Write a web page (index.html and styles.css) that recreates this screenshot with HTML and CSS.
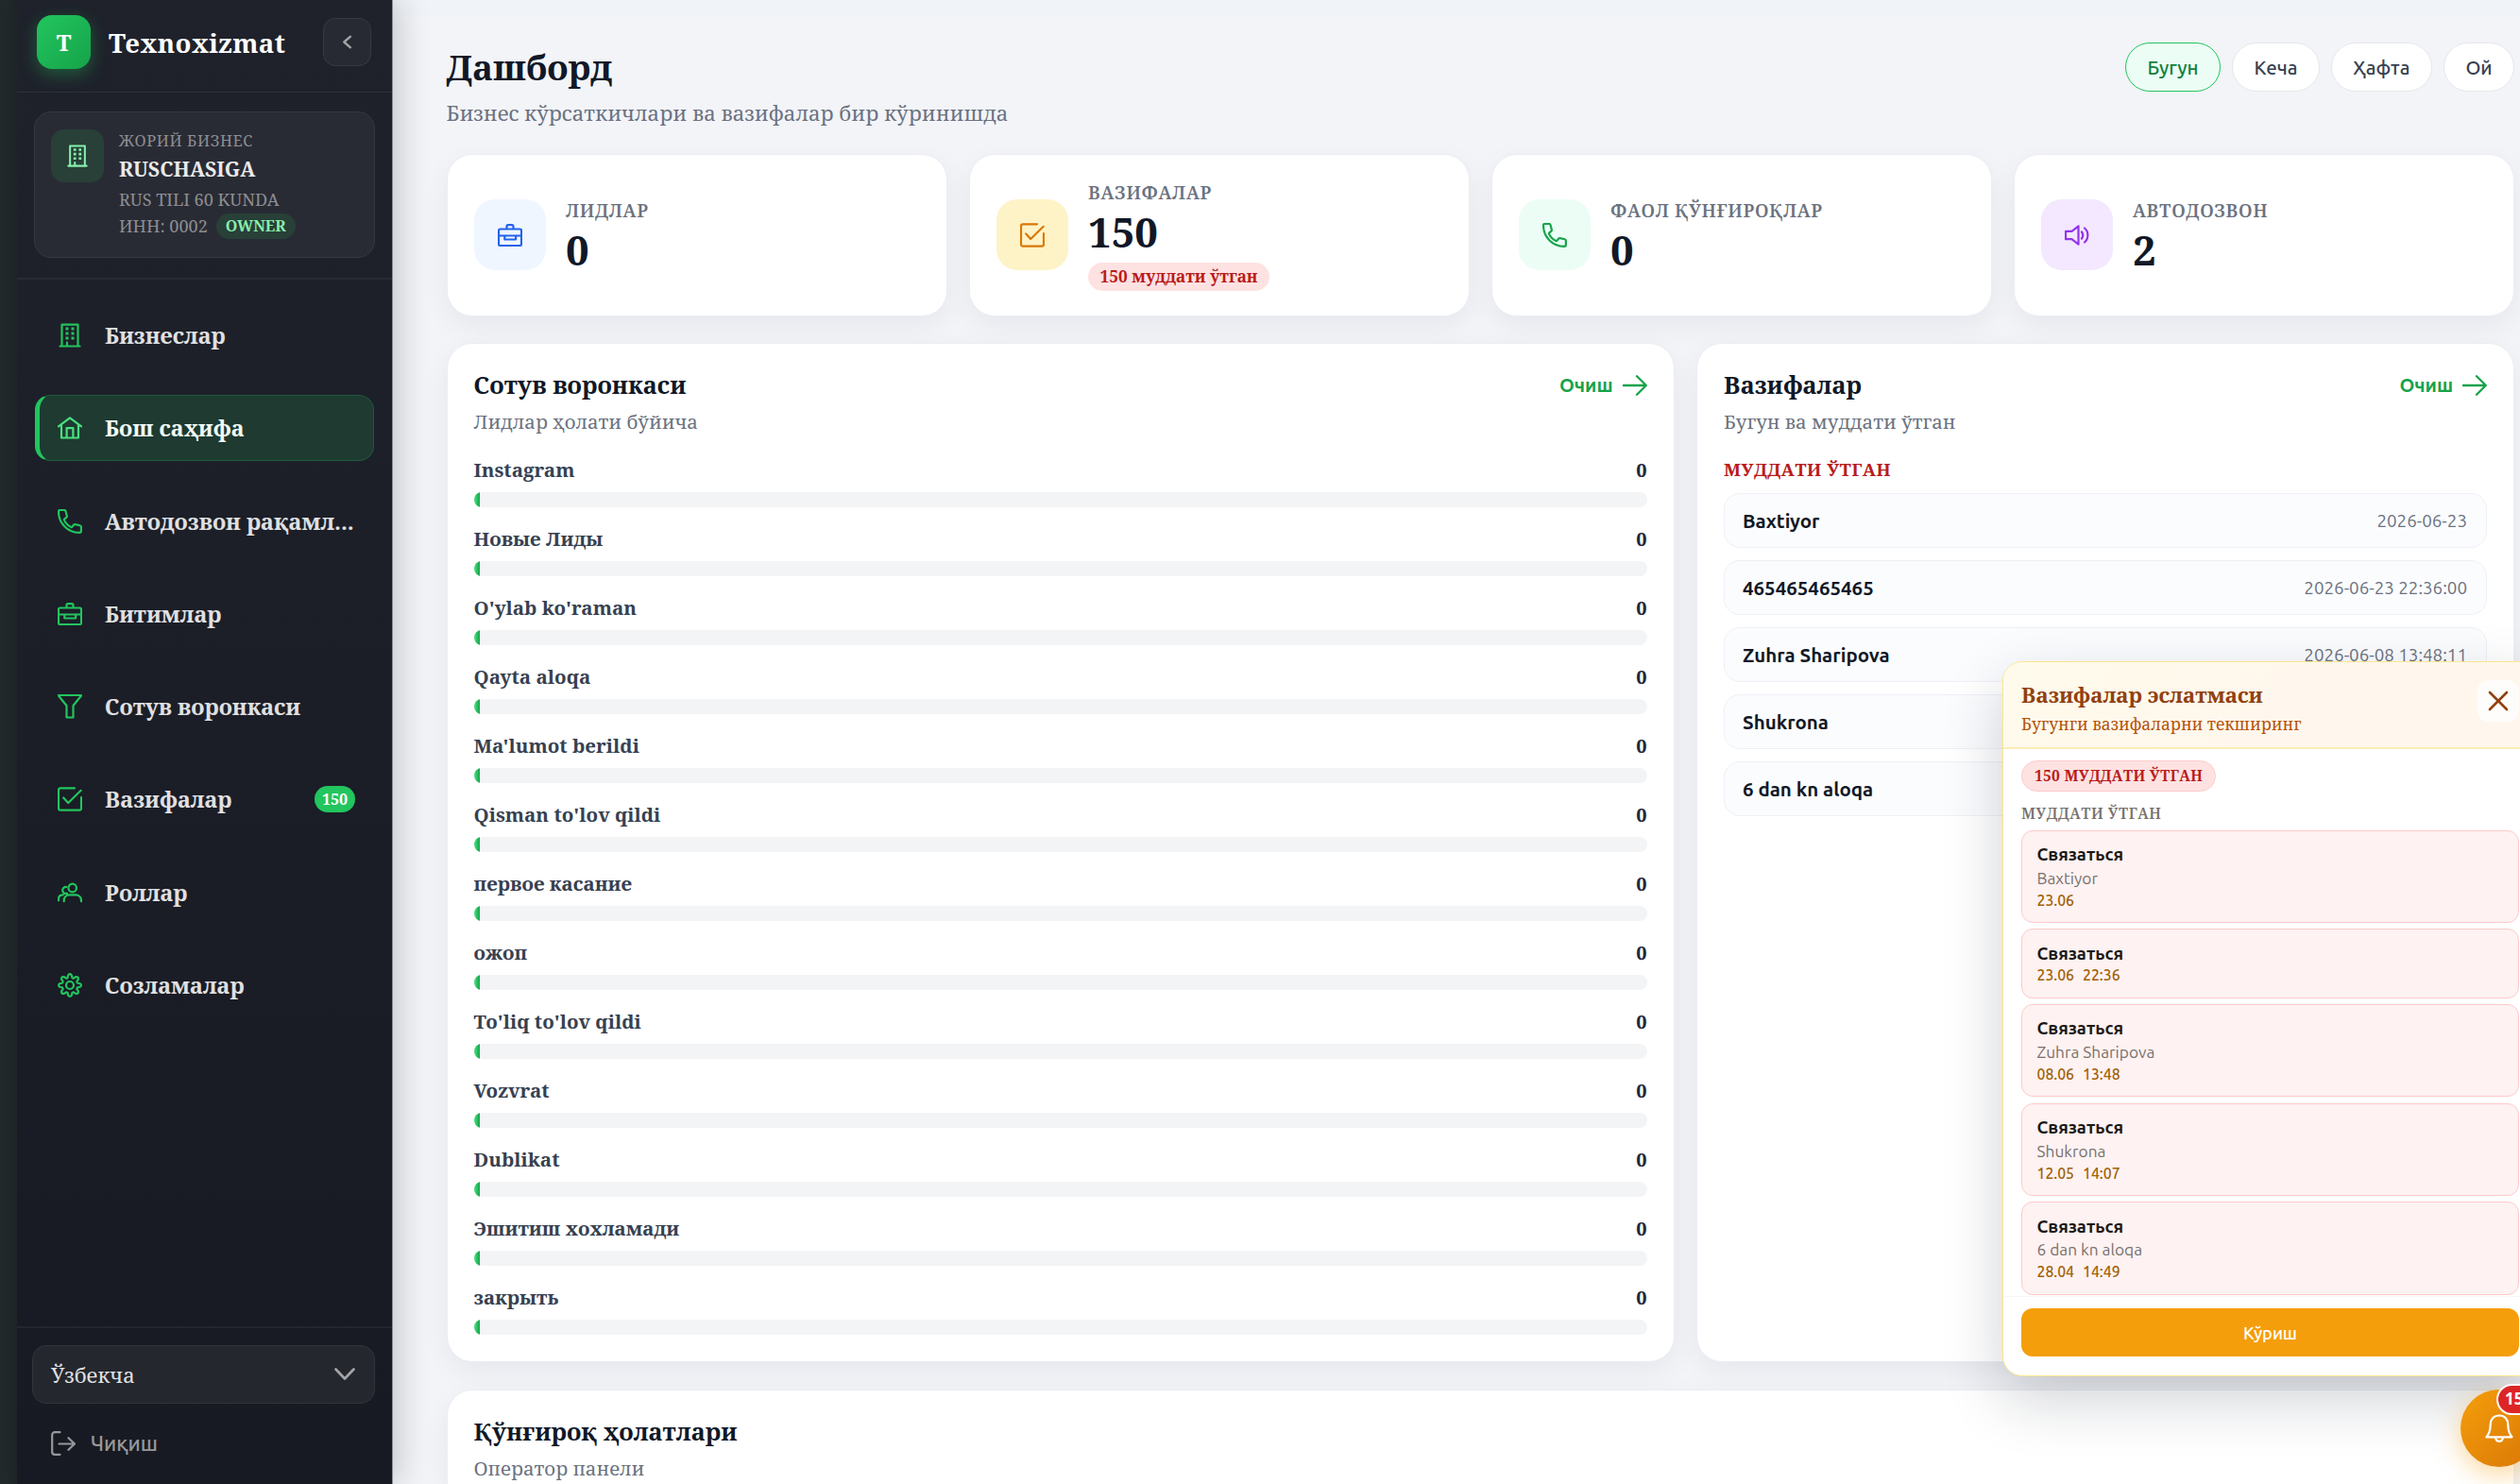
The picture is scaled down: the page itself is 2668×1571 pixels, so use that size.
FILE: index.html
```html
<!DOCTYPE html>
<html lang="uz">
<head>
<meta charset="utf-8">
<title>Texnoxizmat</title>
<link rel="stylesheet" href="styles.css">
</head>
<body>
<svg class="sprite" aria-hidden="true">
  <symbol id="i-building" viewBox="0 0 26 26"><path d="M4.5 24.5V1.7h17v22.8M2.5 24.5h21M10 24.5v-4"/><path class="dots" d="M8.500 6h3M14.500 6h3M8.500 11h3M14.500 11h3M8.500 16h3M14.500 16h3"/></symbol>
  <symbol id="i-home" viewBox="0 0 26 26"><path d="M1 11.300 13 2.300l12 9M4 9.500v14h18v-14M9.600 23.500V13.200h6.800v10.300"/></symbol>
  <symbol id="i-phone" viewBox="0 0 26 26"><path d="M1 2.800C1 1.800 1.800 1 2.800 1H7c.8 0 1.400.5 1.600 1.300l1.200 4.900c.2.600-.1 1.300-.6 1.700L7.300 10.400c-.4.300-.5.800-.3 1.200 1.500 3.300 4 5.800 7.300 7.300.400.200.900.100 1.200-.3l1.500-1.900c.4-.5 1.100-.8 1.700-.6l4.900 1.200c.8.200 1.300.8 1.300 1.600v4.200c0 1-.8 1.800-1.800 1.800C11 25 1 15 1 2.800z"/></symbol>
  <symbol id="i-case" viewBox="0 0 26 26"><path d="M2.500 6.500h21c.8 0 1.500.7 1.500 1.500v14.500c0 .8-.7 1.500-1.500 1.500h-21C1.700 24 1 23.300 1 22.500V8c0-.8.7-1.500 1.500-1.500zM9.500 6.500V3.700c0-.9.700-1.500 1.500-1.500h4c.9 0 1.500.7 1.500 1.500v2.800M1 13.500h24M7.300 13.500v4h11.800v-4"/></symbol>
  <symbol id="i-funnel" viewBox="0 0 26 26"><path d="M1.200 1h23.600v.8L16.500 12v12.500h-7V12L1.200 1.800z"/></symbol>
  <symbol id="i-check" viewBox="0 0 26 26"><path d="M18 1.300H3c-1.100 0-2 .9-2 2v19.400c0 1.100.9 2 2 2h20c1.100 0 2-.9 2-2V11M6.200 11.500l5 5.500L24.700 3.800"/></symbol>
  <symbol id="i-users" viewBox="0 0 26 26"><circle cx="15.700" cy="8" r="4.300"/><path d="M6.700 22.200v-1c0-3.400 2.500-5.900 5.800-5.900h6.600c3.400 0 5.900 2.500 5.900 5.900v1M9.200 7A3.500 3.500 0 1 0 10 13.700M1 21.300v-1.500c0-2.700 1.900-4.500 4.700-4.500"/></symbol>
  <symbol id="i-gear" viewBox="0 0 26 26"><circle cx="13" cy="13" r="4"/><path d="M10.770 4.690C10.460-.06 15.540-.06 15.230 4.690Q15.900 5.980 17.300 5.550C20.440 1.970 24.030 5.560 20.450 8.700Q20.020 10.090 21.310 10.770C26.060 10.460 26.060 15.540 21.310 15.230Q20.020 15.910 20.450 17.300C24.030 20.440 20.440 24.030 17.300 20.450Q15.900 20.020 15.230 21.310C15.540 26.060 10.460 26.060 10.770 21.310Q10.100 20.020 8.700 20.450C5.560 24.030 1.970 20.440 5.550 17.300Q5.980 15.910 4.690 15.230C-.06 15.540-.06 10.460 4.690 10.770Q5.980 10.090 5.550 8.700C1.970 5.560 5.560 1.970 8.700 5.550Q10.100 5.980 10.770 4.690z"/></symbol>
  <symbol id="i-arrow" viewBox="0 0 26 26"><path d="M.5 13h24M15 3.200 24.800 13 15 22.800"/></symbol>
  <symbol id="i-sound" viewBox="0 0 26 26"><path d="M1 8.800h6.500l7-5.500v19.400l-7-5.500H1zM18 9.500c1.400 2 1.400 5 0 7M21 5.500c4.500 3.500 4.500 11.500 0 15"/></symbol>
  <symbol id="i-logout" viewBox="0 0 26 26"><path d="M9.500 1.200H4c-1.500 0-2.800 1.200-2.800 2.800v18c0 1.500 1.200 2.800 2.800 2.800h5.500M8.500 13.500H25M18.500 7.200 25 13.500l-6.500 6.300"/></symbol>
  <symbol id="i-bell" viewBox="0 0 32 32"><path d="M16 2.500c-6 0-9.300 4.300-9.300 9.800 0 5-1 9.200-4.200 13h27c-3.200-3.800-4.200-8-4.200-13 0-5.500-3.300-9.800-9.300-9.800zM11.800 25.500c.6 2.900 2.200 4.300 4.200 4.300s3.600-1.400 4.200-4.300"/></symbol>
</svg>

<div class="app">
  <aside class="sidebar">
    <header class="brand">
      <span class="brand-logo">T</span>
      <span class="brand-name">Texnoxizmat</span>
      <button class="collapse"><svg viewBox="0 0 12 18"><path d="M10.500 2 2.500 9l8 7"/></svg></button>
    </header>
    <section class="business">
      <div class="business-card">
        <span class="business-icon"><svg><use href="#i-building"/></svg></span>
        <div class="business-info">
          <div class="b-label">ЖОРИЙ БИЗНЕС</div>
          <div class="b-name">RUSCHASIGA</div>
          <div class="b-plan">RUS TILI 60 KUNDA</div>
          <div class="b-inn">ИНН: 0002 <span class="owner">OWNER</span></div>
        </div>
      </div>
    </section>
    <nav class="nav">
      <a class="nav-item"><svg><use href="#i-building"/></svg><span>Бизнеслар</span></a>
      <a class="nav-item active"><svg><use href="#i-home"/></svg><span>Бош саҳифа</span></a>
      <a class="nav-item"><svg><use href="#i-phone"/></svg><span>Автодозвон рақамл...</span></a>
      <a class="nav-item"><svg><use href="#i-case"/></svg><span>Битимлар</span></a>
      <a class="nav-item"><svg><use href="#i-funnel"/></svg><span>Сотув воронкаси</span></a>
      <a class="nav-item"><svg><use href="#i-check"/></svg><span>Вазифалар</span><b class="nav-badge">150</b></a>
      <a class="nav-item"><svg><use href="#i-users"/></svg><span>Роллар</span></a>
      <a class="nav-item"><svg><use href="#i-gear"/></svg><span>Созламалар</span></a>
    </nav>
    <footer class="side-foot">
      <div class="lang"><span>Ўзбекча</span><svg viewBox="0 0 22 14"><path d="M1.500 1.500 11 11.500l9.500-10"/></svg></div>
      <a class="logout"><svg><use href="#i-logout"/></svg><span>Чиқиш</span></a>
    </footer>
  </aside>

  <main class="main">
    <div class="page-head">
      <div>
        <h1>Дашборд</h1>
        <p class="lead">Бизнес кўрсаткичлари ва вазифалар бир кўринишда</p>
      </div>
      <div class="filters">
        <button class="chip on">Бугун</button><button class="chip">Кеча</button><button class="chip">Ҳафта</button><button class="chip">Ой</button>
      </div>
    </div>

    <div class="stats">
      <div class="card stat"><span class="stat-icon blue"><svg><use href="#i-case"/></svg></span><div><div class="stat-label">ЛИДЛАР</div><div class="stat-value">0</div></div></div>
      <div class="card stat"><span class="stat-icon amber"><svg><use href="#i-check"/></svg></span><div><div class="stat-label">ВАЗИФАЛАР</div><div class="stat-value">150</div><div class="stat-pill">150 муддати ўтган</div></div></div>
      <div class="card stat"><span class="stat-icon green"><svg><use href="#i-phone"/></svg></span><div><div class="stat-label">ФАОЛ ҚЎНҒИРОҚЛАР</div><div class="stat-value">0</div></div></div>
      <div class="card stat"><span class="stat-icon violet"><svg><use href="#i-sound"/></svg></span><div><div class="stat-label">АВТОДОЗВОН</div><div class="stat-value">2</div></div></div>
    </div>

    <div class="panels">
      <section class="card panel">
        <div class="panel-head"><h2>Сотув воронкаси</h2><a class="open">Очиш<svg><use href="#i-arrow"/></svg></a></div>
        <p class="panel-sub">Лидлар ҳолати бўйича</p>
        <div class="funnel">
          <div class="stage"><div class="stage-top"><span>Instagram</span><b>0</b></div><div class="bar"><i></i></div></div>
          <div class="stage"><div class="stage-top"><span>Новые Лиды</span><b>0</b></div><div class="bar"><i></i></div></div>
          <div class="stage"><div class="stage-top"><span>O'ylab ko'raman</span><b>0</b></div><div class="bar"><i></i></div></div>
          <div class="stage"><div class="stage-top"><span>Qayta aloqa</span><b>0</b></div><div class="bar"><i></i></div></div>
          <div class="stage"><div class="stage-top"><span>Ma'lumot berildi</span><b>0</b></div><div class="bar"><i></i></div></div>
          <div class="stage"><div class="stage-top"><span>Qisman to'lov qildi</span><b>0</b></div><div class="bar"><i></i></div></div>
          <div class="stage"><div class="stage-top"><span>первое касание</span><b>0</b></div><div class="bar"><i></i></div></div>
          <div class="stage"><div class="stage-top"><span>ожоп</span><b>0</b></div><div class="bar"><i></i></div></div>
          <div class="stage"><div class="stage-top"><span>To'liq to'lov qildi</span><b>0</b></div><div class="bar"><i></i></div></div>
          <div class="stage"><div class="stage-top"><span>Vozvrat</span><b>0</b></div><div class="bar"><i></i></div></div>
          <div class="stage"><div class="stage-top"><span>Dublikat</span><b>0</b></div><div class="bar"><i></i></div></div>
          <div class="stage"><div class="stage-top"><span>Эшитиш хохламади</span><b>0</b></div><div class="bar"><i></i></div></div>
          <div class="stage"><div class="stage-top"><span>закрыть</span><b>0</b></div><div class="bar"><i></i></div></div>
        </div>
      </section>
      <section class="card panel">
        <div class="panel-head"><h2>Вазифалар</h2><a class="open">Очиш<svg><use href="#i-arrow"/></svg></a></div>
        <p class="panel-sub">Бугун ва муддати ўтган</p>
        <div class="overdue-title">МУДДАТИ ЎТГАН</div>
        <div class="tasks">
          <div class="task"><b>Baxtiyor</b><time>2026-06-23</time></div>
          <div class="task"><b>465465465465</b><time>2026-06-23 22:36:00</time></div>
          <div class="task"><b>Zuhra Sharipova</b><time>2026-06-08 13:48:11</time></div>
          <div class="task"><b>Shukrona</b></div>
          <div class="task"><b>6 dan kn aloqa</b></div>
        </div>
      </section>
    </div>

    <section class="card panel calls">
      <div class="panel-head"><h2>Қўнғироқ ҳолатлари</h2></div>
      <p class="panel-sub">Оператор панели</p>
    </section>
  </main>
</div>

<div class="reminder">
  <div class="rem-head">
    <div><h3>Вазифалар эслатмаси</h3><p>Бугунги вазифаларни текширинг</p></div>
    <button class="rem-close"><svg viewBox="0 0 22 22"><path d="m2 2 18 18M20 2 2 20"/></svg></button>
  </div>
  <div class="rem-body">
    <div class="rem-pill">150 МУДДАТИ ЎТГАН</div>
    <div class="rem-label">МУДДАТИ ЎТГАН</div>
    <div class="rem-list">
      <div class="rem-item"><b>Связаться</b><span>Baxtiyor</span><time>23.06</time></div>
      <div class="rem-item"><b>Связаться</b><time>23.06<em>22:36</em></time></div>
      <div class="rem-item"><b>Связаться</b><span>Zuhra Sharipova</span><time>08.06<em>13:48</em></time></div>
      <div class="rem-item"><b>Связаться</b><span>Shukrona</span><time>12.05<em>14:07</em></time></div>
      <div class="rem-item"><b>Связаться</b><span>6 dan kn aloqa</span><time>28.04<em>14:49</em></time></div>
    </div>
  </div>
  <div class="rem-foot"><button>Кўриш</button></div>
</div>
<button class="bell"><svg><use href="#i-bell"/></svg><span class="bell-count">150</span></button>
</body>
</html>
```
FILE: styles.css
```css
:root {
  --serif: "Noto Serif", "DejaVu Serif Condensed", serif;
  --sans: Ubuntu, "Noto Sans", sans-serif;
  --ink: #111827;
  --muted: #6b7280;
}
* { box-sizing: border-box; }
body, h1, h2, h3, p { margin: 0; }
body {
  width: 2668px;
  height: 1571px;
  overflow: hidden;
  position: relative;
  font-family: var(--serif);
  color: var(--ink);
  background: #f3f4f8;
}
button { font-family: var(--sans); padding: 0; border: 0; }
svg { fill: none; stroke: currentColor; stroke-width: 2.200; stroke-linejoin: round; stroke-linecap: round; flex: none; }
.dots { stroke-linecap: butt; stroke-width: 2.800; }
.sprite { position: absolute; width: 0; height: 0; }

.app { display: flex; height: 1571px; padding-left: 18px; background: linear-gradient(90deg, #222b2c 0, #202729 18px, #f3f4f8 18px); }

/* Sidebar */
.sidebar {
  width: 398px;
  flex: none;
  display: flex;
  flex-direction: column;
  position: relative;
  z-index: 2;
  color: #e0e0e2;
  background: linear-gradient(180deg, #1f222b 0, #1b1e27 50%, #171a22 100%);
  border-right: 1px solid #8b8f98;
  box-shadow: 6px 0 32px rgba(0, 20, 10, .2);
}
.brand { height: 98px; flex: none; display: flex; align-items: center; padding: 0 22px 8px 21px; border-bottom: 1px solid #2f323a; }
.brand-logo {
  width: 57px; height: 57px; border-radius: 16px;
  display: grid; place-items: center;
  font-weight: 700; font-size: 24px; color: #fff;
  background: linear-gradient(135deg, #22c55e, #16a34a);
  box-shadow: 0 6px 18px rgba(34, 197, 94, .35);
}
.brand-name { margin-left: 19px; font-size: 27.600px; font-weight: 700; letter-spacing: .4px; color: #fff; }
.collapse { margin-left: auto; width: 51px; height: 51px; border-radius: 13px; background: #272a32; border: 1px solid #373a42; color: #a3a3a6; display: grid; place-items: center; }
.collapse svg { width: 11px; height: 17px; stroke-width: 2.600; stroke-linecap: butt; }

.business { height: 198px; flex: none; padding: 20px 18px 0; border-bottom: 2px solid #282b33; }
.business-card { height: 155px; padding: 18px 17px; display: flex; gap: 16px; border: 1px solid #363942; border-radius: 18px; background: #292b34; }
.business-icon { width: 56px; height: 56px; border-radius: 14px; background: #284038; color: #86efac; display: grid; place-items: center; flex: none; }
.business-icon svg { width: 24px; height: 26px; }
.b-label { font-size: 16.300px; line-height: 24.400px; letter-spacing: .6px; color: #8d8e92; }
.b-name { font-size: 21.300px; line-height: 36.200px; font-weight: 700; color: #e9e9ea; }
.b-plan { font-size: 18.100px; line-height: 27.500px; color: #8d8e92; }
.b-inn { font-size: 18.100px; line-height: 29.500px; color: #8d8e92; display: flex; align-items: center; gap: 9px; }
.owner { height: 27px; line-height: 27px; padding: 0 10px; border-radius: 14px; background: #284038; color: #86efac; font-size: 16px; font-weight: 700; }

.nav { padding: 24px 19px 0 19px; display: flex; flex-direction: column; gap: 28.300px; }
.nav-item { height: 70px; flex: none; display: flex; align-items: center; gap: 24px; padding: 0 19px; border: 1px solid transparent; border-left-width: 5px; border-radius: 16px; font-size: 23.450px; font-weight: 700; white-space: nowrap; }
.nav-item svg { width: 26px; height: 26px; color: #22c55e; }
.nav-item.active { background: #1e3a31; border-color: #1f5a3b; border-left-color: #22c55e; color: #f2fbf5; }
.nav-item.active svg { color: #4ade80; }
.nav-badge { margin-left: auto; width: 43px; height: 28px; line-height: 28px; border-radius: 14px; text-align: center; font-size: 16px; font-weight: 700; color: #fff; background: #22c55e; }

.side-foot { margin-top: auto; flex: none; height: 167px; padding: 18px 18px 0 16px; border-top: 2px solid #23262e; }
.lang { height: 62px; display: flex; align-items: center; justify-content: space-between; padding: 0 20px 0 19px; font-size: 22px; border: 1px solid #32353c; border-radius: 15px; background: #24272e; }
.lang svg { width: 22px; height: 14px; color: #a5a5a8; stroke-width: 2.600; }
.logout { height: 40px; margin-top: 21.500px; padding-left: 20px; display: flex; align-items: center; gap: 16px; font-family: var(--sans); font-size: 22px; font-weight: 540; color: #97989b; }
.logout svg { width: 26px; height: 26px; }

/* Main column */
.main { flex: 1; min-width: 0; padding: 45px 6px 0 56.500px; background: linear-gradient(180deg, #f0f4f8 0, #f0f4f8 16px, #f3f4f8 16px); }
.page-head { display: flex; justify-content: space-between; height: 118px; }
h1 { font-size: 36.850px; line-height: 53.400px; font-weight: 700; }
.lead { font-size: 22.120px; line-height: 42px; color: var(--muted); }
.filters { display: flex; gap: 12.200px; }
.chip { height: 52px; padding: 0 22.400px; border-radius: 26px; border: 1px solid #e5e7eb; background: #fff; color: #374151; font-size: 20.400px; font-weight: 550; white-space: nowrap; }
.chip.on { background: #ecfdf5; border-color: #22c55e; color: #15803d; }

.card { background: #fff; border: 1px solid #ebedf5; border-radius: 27px; box-shadow: 0 10px 30px rgba(15, 23, 42, .055); }
.stats { display: grid; grid-template-columns: repeat(4, 1fr); gap: 22.500px; }
.stat { height: 172px; display: flex; align-items: center; gap: 21.500px; padding: 0 28px 1px; }
.stat-icon { width: 76px; height: 75px; border-radius: 22px; display: grid; place-items: center; flex: none; }
.stat-icon svg { width: 26px; height: 26px; }
.blue { background: #eff6ff; color: #2563eb; }
.amber { background: #fef3c7; color: #d97706; }
.green { background: #ecfdf5; color: #16a34a; }
.violet { background: #f3e8ff; color: #9333ea; }
.stat-label { font-size: 19px; line-height: 31px; letter-spacing: .66px; font-weight: 600; color: var(--muted); }
.stat-value { font-size: 43.600px; line-height: 50px; font-weight: 700; }
.stat-pill { margin-top: 8px; height: 30.500px; line-height: 30.500px; padding: 0 12.500px; border-radius: 16px; background: #fee2e2; color: #b91c1c; font-size: 17.250px; font-weight: 700; }

.panels { display: grid; grid-template-columns: 1300px 1fr; gap: 23.500px; height: 1079px; margin-top: 28px; }
.panel { padding: 27px 28px; }
.panel-head { display: flex; justify-content: space-between; align-items: center; height: 33px; }
h2 { font-size: 25.450px; line-height: 33px; font-weight: 700; }
.panel-sub { font-size: 20.400px; line-height: 44px; color: var(--muted); margin-bottom: 13.500px; }
.open { display: flex; align-items: center; gap: 10px; font-family: var(--sans); font-size: 20.200px; font-weight: 600; color: #16a34a; }
.open svg { width: 26px; height: 26px; stroke-width: 2.300; }

.funnel { display: flex; flex-direction: column; gap: 17.500px; }
.stage-top { display: flex; justify-content: space-between; font-size: 20.550px; line-height: 31px; font-weight: 700; color: #374151; }
.stage-top b { font-weight: 700; font-size: 20px; color: #1f2937; }
.bar { margin-top: 8.500px; height: 16px; border-radius: 8px; background: #f3f4f6; overflow: hidden; }
.bar i { display: block; width: 6px; height: 16px; background: linear-gradient(90deg, #4ade80, #16a34a); }

.overdue-title { font-size: 18.600px; line-height: 30px; letter-spacing: .45px; font-weight: 700; color: #b91c1c; }
.tasks { margin-top: 10.500px; display: flex; flex-direction: column; gap: 13px; }
.task { height: 58px; padding: 0 20px 0 19px; display: flex; align-items: center; justify-content: space-between; border: 1px solid #eef0f6; border-radius: 17px; background: #fbfcfe; font-family: var(--sans); font-size: 20.500px; }
.task b { font-weight: 570; }
.task time { font-size: 18.800px; color: var(--muted); }
.calls { margin-top: 29px; height: 100px; border-bottom: 0; border-radius: 27px 27px 0 0; overflow: hidden; }
.calls .panel-sub { margin-bottom: 0; height: 38px; }

/* Reminder popup, floats over the page's lower right corner */
.reminder {
  position: absolute; left: 2120px; top: 700px; width: 567px; height: 756.500px; z-index: 5;
  display: flex; flex-direction: column;
  border: 1px solid #fde68a; border-radius: 21px; background: #fff;
  box-shadow: 0 24px 64px rgba(15, 23, 42, .2);
}
.rem-head { height: 91.500px; flex: none; padding: 19px 19px 0; display: flex; justify-content: space-between; border-bottom: 2px solid #fdecb5; border-radius: 20px 20px 0 0; background: linear-gradient(135deg, #fffbeb, #fff7ed 50%); }
h3 { font-size: 22.300px; line-height: 31px; font-weight: 700; color: #92400e; }
.rem-head p { font-size: 17.400px; line-height: 31px; color: #b45309; }
.rem-close { width: 44px; height: 44px; border-radius: 12px; background: rgba(255, 255, 255, .75); color: #92400e; display: grid; place-items: center; }
.rem-close svg { width: 22px; height: 22px; stroke-width: 2.600; }
.rem-body { padding: 12px 19px 0; }
.rem-pill { width: 206px; height: 33px; line-height: 31px; text-align: center; border: 1px solid #fecaca; border-radius: 17px; background: #fee2e2; color: #b91c1c; font-size: 15.500px; letter-spacing: .3px; font-weight: 700; }
.rem-label { margin-top: 11.500px; font-size: 15.600px; line-height: 24px; letter-spacing: .55px; font-weight: 600; color: #78716c; }
.rem-list { margin-top: 5.500px; display: flex; flex-direction: column; gap: 6.200px; }
.rem-item { padding: 12.500px 16px 10.500px 15.500px; border: 1px solid #fecaca; border-radius: 12px; background: #fef2f2; font-family: var(--sans); display: flex; flex-direction: column; }
.rem-item b { font-size: 18.500px; line-height: 24.500px; font-weight: 570; color: #1c1917; }
.rem-item span { font-size: 17.300px; line-height: 25px; color: #78716c; }
.rem-item time { font-size: 15.800px; line-height: 23px; margin-bottom: 1px; font-weight: 560; color: #a16207; }
.rem-item em { font-style: normal; margin-left: 9px; }
.rem-foot { margin-top: auto; height: 84px; flex: none; padding: 12.500px 19px 0; border-top: 1px solid #f7f7f7; }
.rem-foot button { display: block; width: 100%; height: 51px; border-radius: 12px; background: #f59e0b; color: #fff; font-size: 18.300px; font-weight: 550; }

.bell { position: absolute; left: 2605px; top: 1471px; width: 82px; height: 82px; z-index: 6; border-radius: 50%; color: #fff; background: linear-gradient(135deg, #f59e0b, #d97706); box-shadow: 0 8px 28px rgba(245, 158, 11, .4); display: grid; place-items: center; }
.bell svg { width: 32px; height: 32px; }
.bell-count { position: absolute; left: 38px; top: -6px; width: 52px; height: 33px; line-height: 28px; padding-left: 7px; border: 2.500px solid #fff; border-radius: 17px; background: #dc2626; font-family: "Noto Sans", sans-serif; font-size: 17px; font-weight: 700; text-align: left; }
```
